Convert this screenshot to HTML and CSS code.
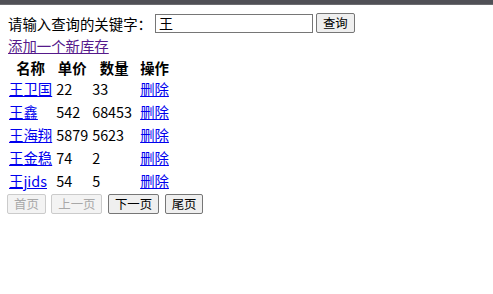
FILE: index.html
```html
<!DOCTYPE html>
<html lang="zh-CN">
<head>
<meta charset="utf-8">
<title>库存查询</title>
<link rel="stylesheet" href="styles.css">
</head>
<body>
<div class="topbar"></div>
<div class="page">
  <form class="search">
    <span class="label">请输入查询的关键字：</span><input class="kw" type="text" value="王"><button class="btn" type="button">查询</button>
  </form>
  <div class="addline"><a class="link visited" href="#">添加一个新库存</a></div>
  <table class="list">
    <thead>
      <tr><th>名称</th><th>单价</th><th class="qty">数量</th><th>操作</th></tr>
    </thead>
    <tbody>
      <tr><td><a class="link" href="#">王卫国</a></td><td>22</td><td>33</td><td><a class="link" href="#">删除</a></td></tr>
      <tr><td><a class="link" href="#">王鑫</a></td><td>542</td><td>68453</td><td><a class="link" href="#">删除</a></td></tr>
      <tr><td><a class="link" href="#">王海翔</a></td><td>5879</td><td>5623</td><td><a class="link" href="#">删除</a></td></tr>
      <tr><td><a class="link" href="#">王金稳</a></td><td>74</td><td>2</td><td><a class="link" href="#">删除</a></td></tr>
      <tr><td><a class="link" href="#">王jids</a></td><td>54</td><td>5</td><td><a class="link" href="#">删除</a></td></tr>
    </tbody>
  </table>
  <div class="pager">
    <button class="btn" type="button" disabled>首页</button>
    <button class="btn" type="button" disabled>上一页</button>
    <button class="btn" type="button">下一页</button>
    <button class="btn" type="button">尾页</button>
  </div>
</div>
</body>
</html>
```

FILE: styles.css
```css
html, body {
  margin: 0;
  padding: 0;
  background: #fff;
}
body {
  font-family: "Noto Sans CJK SC", "Noto Sans", sans-serif;
  font-size: 14.4px;
  line-height: 19px;
  color: #000;
}
.topbar {
  height: 4px;
  background: #505056;
  border-bottom: 1px solid #6c6c70;
}
.page {
  padding: 8px 8px 8px 8px;
}
.search {
  display: flex;
  align-items: center;
  height: 20px;
  margin: 0;
}
.label {
  white-space: nowrap;
}
.kw {
  box-sizing: border-box;
  width: 158px;
  height: 19px;
  margin: 0 3px 0 3px;
  padding: 0 3px;
  border: 1px solid #767676;
  font-family: inherit;
  font-size: 14px;
  line-height: 17px;
  color: #000;
  outline: none;
}
.btn {
  box-sizing: border-box;
  height: 20px;
  padding: 0 6px;
  border: 1px solid #767676;
  border-radius: 2px;
  background: #efefef;
  font-family: inherit;
  font-size: 12.4px;
  line-height: 18px;
  color: #000;
}
.btn:disabled {
  border-color: #cbcbcb;
  background: #f3f3f3;
  color: #a8a8a8;
}
.addline {
  margin-top: 3px;
  height: 19px;
}
.link {
  color: #0000ee;
  text-decoration: underline;
}
.link.visited {
  color: #551a8b;
}
.list {
  border-collapse: separate;
  border-spacing: 2px;
  margin: 1px 0 0 -2px;
}
.list th,
.list td {
  padding: 1px;
  line-height: 19px;
  white-space: nowrap;
}
.list th {
  font-weight: bold;
  text-align: center;
  padding: 2px 1px 0 1px;
  line-height: 16px;
}
.list th.qty {
  width: 44px;
}
.list td {
  text-align: left;
}
.pager {
  display: flex;
  gap: 5.5px;
  margin-top: 1px;
  margin-left: -1px;
}
```
